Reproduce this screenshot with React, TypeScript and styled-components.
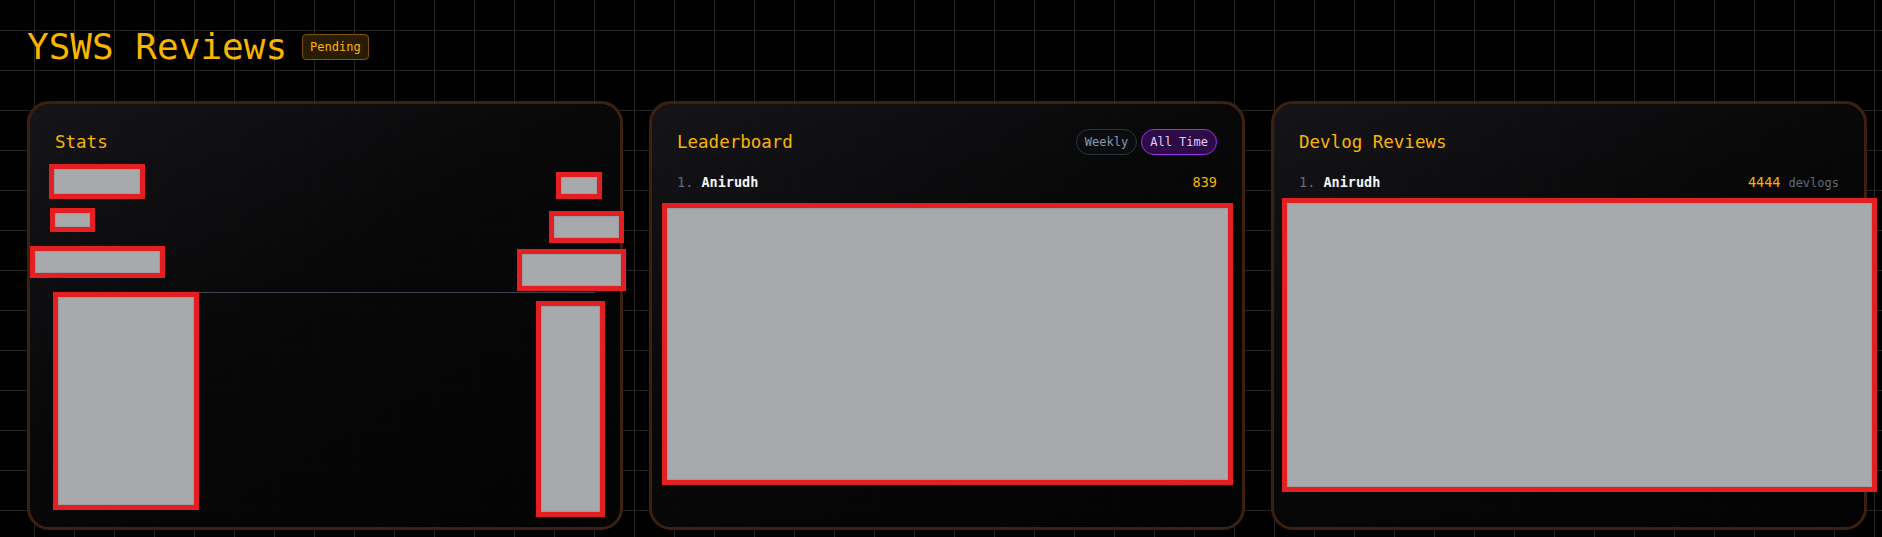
import React from "react";
import styled, { createGlobalStyle } from "styled-components";

const amber = "#fbb400";
const mono = `"DejaVu Sans Mono", "Liberation Mono", monospace`;

const GlobalStyle = createGlobalStyle`
  html, body {
    margin: 0;
    padding: 0;
    background-color: #000;
  }
  body {
    min-height: 100vh;
    font-family: ${mono};
    background-image:
      linear-gradient(to right, #242424 1px, transparent 1px),
      linear-gradient(to bottom, #242424 1px, transparent 1px);
    background-size: 40px 40px;
    background-position: 34px 30px;
  }
  * { box-sizing: border-box; }
`;

const Page = styled.main`
  padding: 25px 14px 0 27px;
`;

const Header = styled.header`
  display: flex;
  align-items: center;
  gap: 15px;
  height: 44px;
`;

const Title = styled.h1`
  margin: 0;
  font-family: ${mono};
  font-size: 36px;
  line-height: 44px;
  font-weight: 400;
  color: ${amber};
`;

const Badge = styled.span`
  display: inline-flex;
  align-items: center;
  height: 26px;
  padding: 0 7px;
  border: 1px solid #7d5406;
  border-radius: 4px;
  background: #2a1b03;
  color: ${amber};
  font-size: 12px;
`;

const Grid = styled.section`
  display: grid;
  grid-template-columns: repeat(3, 596px);
  gap: 26px;
  margin-top: 32px;
`;

const Card = styled.article`
  height: 429px;
  padding: 25px;
  border: 3px solid #3d200e;
  border-radius: 22px;
  background: linear-gradient(
    150deg,
    rgba(22, 22, 26, 0.93) 0%,
    rgba(8, 8, 9, 0.94) 45%,
    rgba(3, 3, 3, 0.95) 100%
  );
`;

const CardHead = styled.div`
  display: flex;
  align-items: center;
  justify-content: space-between;
  height: 26px;
`;

const CardTitle = styled.h2`
  margin: 0;
  font-family: ${mono};
  font-size: 17.5px;
  line-height: 26px;
  font-weight: 400;
  color: ${amber};
`;

const Toggle = styled.div`
  display: flex;
  gap: 4px;
`;

const Pill = styled.button<{ $active?: boolean }>`
  height: 26px;
  padding: 0 8px;
  border-radius: 13px;
  font-family: ${mono};
  font-size: 12px;
  cursor: pointer;
  border: ${(p) => (p.$active ? "1.5px solid #9b2ff0" : "1px solid #2c323d")};
  background: ${(p) => (p.$active ? "#2c0b47" : "#0b0c0f")};
  color: ${(p) => (p.$active ? "#e4c8ff" : "#8b98ad")};
`;

const ListRow = styled.div`
  display: flex;
  align-items: baseline;
  justify-content: space-between;
  margin-top: 17px;
  font-size: 13.5px;
  line-height: 20px;
`;

const Rank = styled.span`
  color: #5f6b7f;
`;

const Name = styled.span`
  color: #f4f6fa;
  font-weight: 700;
`;

const Score = styled.span`
  color: ${amber};
`;

const Unit = styled.span`
  color: #5f6b7f;
  font-size: 12px;
  margin-left: 8px;
`;

// blocked-out region
const Redact = styled.div<{
  $w: number;
  $h: number;
  $mt?: number;
  $ml?: number;
  $mr?: number;
}>`
  flex: none;
  width: ${(p) => p.$w}px;
  height: ${(p) => p.$h}px;
  margin-top: ${(p) => p.$mt ?? 0}px;
  margin-left: ${(p) => p.$ml ?? 0}px;
  margin-right: ${(p) => p.$mr ?? 0}px;
  border: 5px solid #e41f21;
  background: #a8a9ac;
  box-shadow: inset 0 0 0 1px #9c9da0;
`;

const StatRow = styled.div<{ $gap: number }>`
  display: flex;
  align-items: flex-start;
  justify-content: space-between;
  margin-top: ${(p) => p.$gap}px;
`;

const ChartRow = styled.div`
  display: flex;
  align-items: flex-start;
  justify-content: space-between;
  margin-top: 1px;
  border-top: 1px solid #3a4352;
`;

const App = () => {
  return (
    <>
      <GlobalStyle />
      <Page>
        <Header>
          <Title>YSWS Reviews</Title>
          <Badge>Pending</Badge>
        </Header>

        <Grid>
          <Card>
            <CardHead>
              <CardTitle>Stats</CardTitle>
            </CardHead>
            <StatRow $gap={9}>
              <Redact $w={96} $h={35} $ml={-6} />
              <Redact $w={46} $h={27} $mt={8} $mr={-7} />
            </StatRow>
            <StatRow $gap={9}>
              <Redact $w={45} $h={24} $ml={-5} />
              <Redact $w={75} $h={32} $mt={3} $mr={-29} />
            </StatRow>
            <StatRow $gap={3}>
              <Redact $w={135} $h={32} $ml={-25} />
              <Redact $w={109} $h={42} $mt={3} $mr={-31} />
            </StatRow>
            <ChartRow>
              <Redact $w={146} $h={218} $mt={-1} $ml={-2} />
              <Redact $w={69} $h={216} $mt={8} $mr={-10} />
            </ChartRow>
          </Card>

          <Card>
            <CardHead>
              <CardTitle>Leaderboard</CardTitle>
              <Toggle>
                <Pill>Weekly</Pill>
                <Pill $active>All Time</Pill>
              </Toggle>
            </CardHead>
            <ListRow>
              <span>
                <Rank>1.</Rank> <Name>Anirudh</Name>
              </span>
              <Score>839</Score>
            </ListRow>
            <Redact $w={571} $h={282} $mt={11} $ml={-15} />
          </Card>

          <Card>
            <CardHead>
              <CardTitle>Devlog Reviews</CardTitle>
            </CardHead>
            <ListRow>
              <span>
                <Rank>1.</Rank> <Name>Anirudh</Name>
              </span>
              <span>
                <Score>4444</Score>
                <Unit>devlogs</Unit>
              </span>
            </ListRow>
            <Redact $w={595} $h={294} $mt={5} $ml={-17} />
          </Card>
        </Grid>
      </Page>
    </>
  );
};

export default App;
